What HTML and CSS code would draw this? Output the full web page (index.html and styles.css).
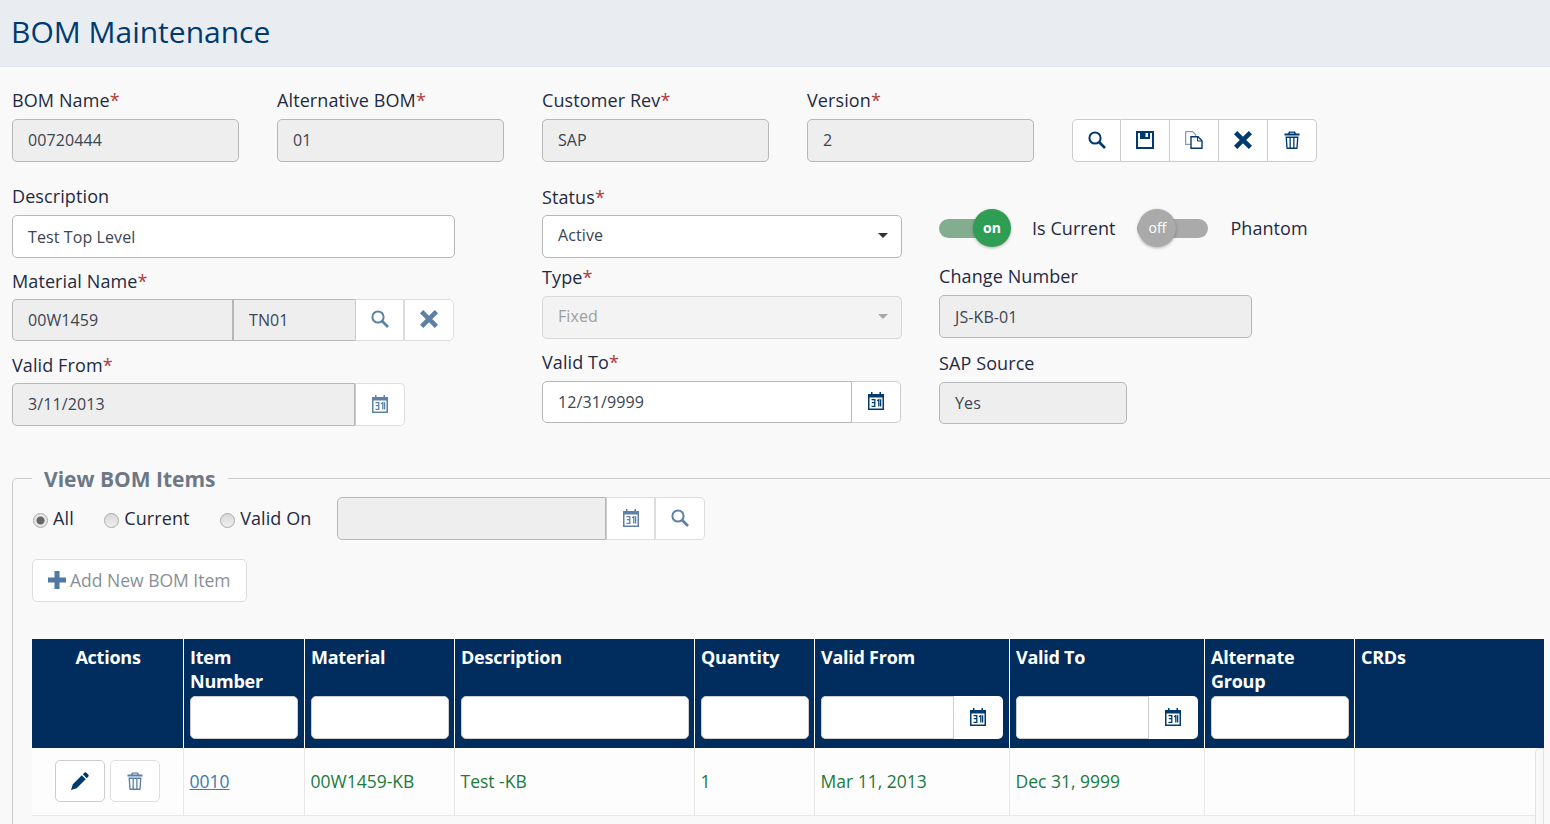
FILE: index.html
```html
<!DOCTYPE html>
<html lang="en">

<head>
    <meta charset="UTF-8">
    <meta name="viewport" content="width=device-width, initial-scale=1.0">
    <title>BOM Maintenance</title>
    <link rel="stylesheet" href="styles.css">
</head>

<body>
    <svg class="defs" width="0" height="0">
        <symbol id="i-search" viewBox="0 0 18 18">
            <circle cx="7" cy="7" r="5.6" fill="none" stroke="currentColor" stroke-width="2"></circle>
            <path d="M11 11l6 6" fill="none" stroke="currentColor" stroke-width="2.6"></path>
        </symbol>
        <symbol id="i-save" viewBox="0 0 18 18">
            <path fill="currentColor" fill-rule="evenodd" d="M0 0h18v18H0zM2 2v14h14V2h-2v6H4V2zM9.500 2v4H12V2z"></path>
        </symbol>
        <symbol id="i-copy" viewBox="0 0 18 18">
            <path fill="none" stroke="#7f9bb8" stroke-width="1.200" d="M.6.600h7l3 3v2M.6.600v12.800h5"></path>
            <path fill="none" stroke="currentColor" stroke-width="1.400" d="M6 5.700h7l4 4v7.600H6z"></path>
            <path fill="none" stroke="currentColor" stroke-width="1" d="M12.500 5.700v4.300H17"></path>
        </symbol>
        <symbol id="i-x" viewBox="0 0 18 18">
            <path d="M1.600 1.600l14.800 14.800M16.400 1.600l-14.800 14.800" fill="none" stroke="currentColor" stroke-width="4.600"></path>
        </symbol>
        <symbol id="i-trash" viewBox="0 0 16 18">
            <path fill="currentColor" fill-rule="evenodd" d="M5 .5h6l1 2h3.500V4.500H.5v-2H4zM6 1.700l-.4.800h4.800l-.4-.8zM1.500 5.500h13l-.8 11.500a1 1 0 0 1-1 1H3.300a1 1 0 0 1-1-1zM3 7l.6 9.500h1.900V7zM6.800 7v9.500h2.400V7zM10.500 7v9.500h1.900L13 7z"></path>
        </symbol>
        <symbol id="i-cal" viewBox="0 0 16 18">
            <path fill="currentColor" d="M3 0h1.500v2H11.500V0H13v2h3v16H0V2h3z"></path>
            <rect x="1.500" y="5.500" width="13" height="11" fill="#fff"></rect>
            <path fill="none" stroke="currentColor" stroke-width="1.300" d="M3.500 7.700h3.300v3h-3M6.800 10.700v3.600H3.500M9 8.800l1.800-1.100v6.800M12.600 7.200v7.300"></path>
        </symbol>
        <symbol id="i-pencil" viewBox="0 0 18 18">
            <path fill="currentColor" d="M13.300.8a1.500 1.500 0 0 1 2.100 0l1.800 1.800a1.500 1.500 0 0 1 0 2.100l-1.500 1.500-3.900-3.900zM10.800 3.300l3.900 3.900-9 9L0 18l1.800-5.700z"></path>
        </symbol>
        <symbol id="i-plus" viewBox="0 0 18 18">
            <path d="M9 0v18M0 9h18" fill="none" stroke="currentColor" stroke-width="5"></path>
        </symbol>
    </svg>

    <header class="page-head">
        <h1>BOM Maintenance</h1>
    </header>

    <main class="page">
        <section class="top-row">
            <div class="field w227">
                <label class="lbl-up">BOM Name<b>*</b></label>
                <div class="input off lift">00720444</div>
            </div>
            <div class="field w227">
                <label class="lbl-up">Alternative BOM<b>*</b></label>
                <div class="input off lift">01</div>
            </div>
            <div class="field w227">
                <label class="lbl-up">Customer Rev<b>*</b></label>
                <div class="input off lift">SAP</div>
            </div>
            <div class="field w227">
                <label class="lbl-up">Version<b>*</b></label>
                <div class="input off lift">2</div>
            </div>
            <div class="tool-group">
                <button class="tool"><svg class="ico18"><use href="#i-search"></use></svg></button>
                <button class="tool"><svg class="ico18"><use href="#i-save"></use></svg></button>
                <button class="tool"><svg class="ico18"><use href="#i-copy"></use></svg></button>
                <button class="tool"><svg class="ico18"><use href="#i-x"></use></svg></button>
                <button class="tool"><svg class="ico-trash"><use href="#i-trash"></use></svg></button>
            </div>
        </section>

        <section class="form-cols">
            <div class="col col-1">
                <div class="field">
                    <label class="lbl-up">Description</label>
                    <div class="input">Test Top Level</div>
                </div>
                <div class="field gap-11">
                    <label>Material Name<b>*</b></label>
                    <div class="joined h42">
                        <div class="input off part-a">00W1459</div>
                        <div class="input off part-b">TN01</div>
                        <button class="tool muted"><svg class="ico18"><use href="#i-search"></use></svg></button>
                        <button class="tool muted"><svg class="ico18"><use href="#i-x"></use></svg></button>
                    </div>
                </div>
                <div class="field gap-12">
                    <label>Valid From<b>*</b></label>
                    <div class="joined w393">
                        <div class="input off grow lift">3/11/2013</div>
                        <button class="tool muted"><svg class="ico-cal"><use href="#i-cal"></use></svg></button>
                    </div>
                </div>
            </div>

            <div class="col col-2">
                <div class="field">
                    <label>Status<b>*</b></label>
                    <div class="input select">Active<i class="caret"></i></div>
                </div>
                <div class="field gap-8">
                    <label class="lbl-up">Type<b>*</b></label>
                    <div class="input select dim">Fixed<i class="caret"></i></div>
                </div>
                <div class="field gap-11">
                    <label class="lbl-7">Valid To<b>*</b></label>
                    <div class="joined h42 w359">
                        <div class="input grow">12/31/9999</div>
                        <button class="tool"><svg class="ico-cal"><use href="#i-cal"></use></svg></button>
                    </div>
                </div>
            </div>

            <div class="col col-3">
                <div class="switches">
                    <span class="switch on"><span class="knob">on</span></span>
                    <span class="switch-label">Is Current</span>
                    <span class="switch"><span class="knob">off</span></span>
                    <span class="switch-label">Phantom</span>
                </div>
                <div class="field gap-17 w313">
                    <label class="lbl-up">Change Number</label>
                    <div class="input off">JS-KB-01</div>
                </div>
                <div class="field gap-14 w188">
                    <label class="lbl-up">SAP Source</label>
                    <div class="input off h42">Yes</div>
                </div>
            </div>
        </section>

        <fieldset class="items">
            <legend>View BOM Items</legend>

            <div class="filter-row">
                <label class="radio"><input type="radio" name="view" checked>All</label>
                <label class="radio"><input type="radio" name="view">Current</label>
                <label class="radio"><input type="radio" name="view">Valid On</label>
                <div class="joined filter-date">
                    <div class="input off grow"></div>
                    <button class="tool muted"><svg class="ico-cal"><use href="#i-cal"></use></svg></button>
                    <button class="tool muted"><svg class="ico18"><use href="#i-search"></use></svg></button>
                </div>
            </div>

            <button class="add-btn"><svg class="ico-plus"><use href="#i-plus"></use></svg>Add New BOM Item</button>

            <div class="table-wrap">
                <table class="grid">
                    <colgroup>
                        <col class="c-actions">
                        <col class="c-item">
                        <col class="c-material">
                        <col class="c-desc">
                        <col class="c-qty">
                        <col class="c-date">
                        <col class="c-date">
                        <col class="c-alt">
                        <col>
                    </colgroup>
                    <thead>
                        <tr>
                            <th class="center"><div class="th-title">Actions</div></th>
                            <th class="pr6"><div class="th-title">Item Number</div><input class="th-input"></th>
                            <th><div class="th-title">Material</div><input class="th-input"></th>
                            <th><div class="th-title">Description</div><input class="th-input"></th>
                            <th><div class="th-title">Quantity</div><input class="th-input"></th>
                            <th class="pr6">
                                <div class="th-title">Valid From</div>
                                <div class="th-date"><input class="th-input">
                                    <span class="th-cal"><svg class="ico-cal"><use href="#i-cal"></use></svg></span></div>
                            </th>
                            <th class="pr6">
                                <div class="th-title">Valid To</div>
                                <div class="th-date"><input class="th-input">
                                    <span class="th-cal"><svg class="ico-cal"><use href="#i-cal"></use></svg></span></div>
                            </th>
                            <th><div class="th-title">Alternate Group</div><input class="th-input"></th>
                            <th><div class="th-title">CRDs</div></th>
                        </tr>
                    </thead>
                    <tbody>
                        <tr>
                            <td class="center">
                                <button class="act"><svg class="ico18"><use href="#i-pencil"></use></svg></button>
                                <button class="act faded"><svg class="ico-trash"><use href="#i-trash"></use></svg></button>
                            </td>
                            <td><a href="#">0010</a></td>
                            <td>00W1459-KB</td>
                            <td>Test -KB</td>
                            <td>1</td>
                            <td>Mar 11, 2013</td>
                            <td>Dec 31, 9999</td>
                            <td></td>
                            <td></td>
                        </tr>
                    </tbody>
                </table>
                <div class="scroll-edge"></div>
            </div>
        </fieldset>
    </main>
</body>

</html>
```

FILE: styles.css
```css
* {
    margin: 0;
    padding: 0;
    box-sizing: border-box;
}

html,
body {
    height: 824px;
    overflow: hidden;
}

body {
    background-color: #f9f9f9;
    color: #1f2a44;
    font: 18px/24px "Open Sans", "Noto Sans", sans-serif;
}

.defs {
    position: absolute;
}

.page-head {
    height: 67px;
    padding: 11px 11px 0;
    background-color: #e9edf2;
    border-bottom: 1px solid #e2e5e9;
}

.page-head h1 {
    color: #003b6f;
    font-size: 30px;
    font-weight: 400;
    line-height: 42px;
}

.page {
    padding: 22px 0 0 12px;
}

/* fields */
.field {
    display: flex;
    flex-direction: column;
}

.field label {
    line-height: 24px;
    letter-spacing: .1px;
    margin-bottom: 6px;
}

.field label.lbl-7 {
    margin-bottom: 7px;
}

.field label.lbl-up {
    margin-top: -1px;
    margin-bottom: 7px;
}

.field label b {
    color: #b03a3a;
    font-weight: 400;
}

.gap-8 { margin-top: 8px; }
.gap-11 { margin-top: 11px; }
.gap-12 { margin-top: 12px; }
.gap-14 { margin-top: 14px; }
.gap-17 { margin-top: 17px; }

.w227 { width: 227px; }
.w313 { width: 313px; }
.w188 { width: 188px; }
.w393 { width: 393px; }
.w359 { width: 359px; }

.input {
    display: flex;
    align-items: center;
    height: 43px;
    padding: 0 15px;
    background-color: #fff;
    border: 1px solid #b5b8bb;
    border-radius: 5px;
    color: #3c4552;
    font-size: 16px;
    letter-spacing: .1px;
}

.input.off {
    background-color: #eee;
}

.input.h42 {
    height: 42px;
}

.input.lift {
    padding-bottom: 2px;
}

.select {
    justify-content: space-between;
    padding-right: 13px;
    padding-bottom: 3px;
}

.select.dim {
    background-color: #f2f3f2;
    border-color: #d5d7d8;
    color: #9a9fa3;
}

.caret {
    border-top: 5px solid #333;
    border-left: 5px solid transparent;
    border-right: 5px solid transparent;
}

.dim .caret {
    border-top-color: #a5a8ab;
}

/* input + addon buttons */
.joined {
    display: flex;
    height: 43px;
}

.joined.h42 {
    height: 42px;
}

.joined .input {
    height: 100%;
    border-radius: 5px 0 0 5px;
}

.joined .grow {
    flex: 1;
}

.joined .part-a {
    width: 220px;
    border-right: 0;
}

.joined .part-b {
    width: 123px;
    border-radius: 0;
    border-left-width: 2px;
    border-right: 0;
}

.tool {
    display: flex;
    align-items: center;
    justify-content: center;
    width: 49px;
    padding-bottom: 2px;
    background-color: #fff;
    border: 1px solid #ccc;
    border-left-width: 0;
    color: #003b70;
}

.tool.muted {
    border-color: #ddd;
    border-left: 1px solid #ccc;
    color: #5d80a6;
}

.tool.muted + .tool.muted {
    border-left-color: #ddd;
}

.joined .tool:last-child {
    border-radius: 0 5px 5px 0;
}

.joined .tool.muted:last-child {
    width: 50px;
}

.ico18 {
    width: 18px;
    height: 18px;
}

.ico-trash {
    width: 16px;
    height: 18px;
}

.ico-cal {
    width: 16px;
    height: 18px;
}

.ico-plus {
    width: 18px;
    height: 18px;
    color: #4f78a3;
}

/* top row */
.top-row {
    display: flex;
    gap: 38px;
}

.tool-group {
    display: flex;
    align-self: flex-end;
    height: 43px;
}

.tool-group .tool:first-child {
    width: 49px;
    border-left-width: 1px;
    border-radius: 5px 0 0 5px;
}

.tool-group .tool:last-child {
    border-radius: 0 5px 5px 0;
}

/* three form columns */
.form-cols {
    display: flex;
    margin-top: 23px;
}

.col-1 {
    width: 443px;
    margin-right: 87px;
}

.col-2 {
    width: 360px;
    margin-right: 37px;
}

.switches {
    display: flex;
    align-items: center;
    height: 40px;
    margin-top: 23px;
}

.switch {
    position: relative;
    width: 71px;
    height: 19px;
    background-color: #aaa;
    border-radius: 10px;
}

.switch.on {
    background-color: #83ad8f;
}

.knob {
    position: absolute;
    top: -10px;
    left: 1px;
    width: 38px;
    height: 38px;
    background-color: #aaa;
    border-radius: 50%;
    box-shadow: 0 1px 3px rgba(0, 0, 0, .3);
    color: #fff;
    font-size: 14px;
    line-height: 38px;
    text-align: center;
}

.switch.on .knob {
    left: 34px;
    background-color: #2f9e54;
    font-weight: 700;
}

.switch-label {
    margin: 0 22px;
    letter-spacing: .05px;
}

/* BOM items */
.items {
    margin: 37px -12px 0 0;
    padding: 4px 17px 0 19px;
    border: 1px solid #ccc;
    border-bottom: 0;
    border-radius: 5px 5px 0 0;
}

.items legend {
    padding: 2px 12px 0;
    color: #6d7886;
    font-size: 21px;
    font-weight: 700;
    line-height: 28px;
}

.filter-row {
    display: flex;
    align-items: center;
    height: 43px;
}

.radio {
    display: flex;
    align-items: center;
    margin-right: 29.500px;
    padding-bottom: 2px;
    letter-spacing: .1px;
}

.radio input {
    appearance: none;
    width: 15px;
    height: 15px;
    margin: 6px 5px 0 1px;
    background: linear-gradient(#d8d8d8, #efefef);
    border: 1px solid #aaa;
    border-radius: 50%;
}

.radio input:checked {
    background: radial-gradient(circle, #666 0 3.500px, #e6e6e6 4.500px);
}

.filter-date {
    width: 368px;
    margin-left: -4px;
}

.add-btn {
    display: flex;
    align-items: center;
    gap: 4px;
    width: 215px;
    height: 43px;
    margin-top: 19px;
    padding: 0 0 2px 15px;
    background-color: #fff;
    border: 1px solid #ddd;
    border-radius: 5px;
    color: #8a8f94;
    font: 17.500px "Open Sans", sans-serif;
}

/* table */
.table-wrap {
    position: relative;
    margin-top: 37px;
    padding-bottom: 8px;
}

.grid {
    width: 100%;
    table-layout: fixed;
    border-collapse: collapse;
}

.c-actions { width: 151px; }
.c-item { width: 121px; }
.c-material { width: 150px; }
.c-desc { width: 240px; }
.c-qty { width: 120px; }
.c-date { width: 195px; }
.c-alt { width: 150px; }

.grid th {
    height: 109px;
    padding: 6px 5px 9px 6px;
    background-color: #002d5d;
    border-left: 1px solid #fff;
    color: #fff;
    font-weight: 700;
    letter-spacing: -.25px;
    text-align: left;
    vertical-align: top;
}

.grid th:first-child {
    border-left: 0;
}

.grid th.center {
    text-align: center;
}

.grid th.pr6 {
    padding-right: 6px;
}

.th-title {
    height: 51px;
    margin-left: .5px;
}

.th-input {
    display: block;
    width: 100%;
    height: 43px;
    background-color: #fff;
    border: 1px solid #ccc;
    border-radius: 5px;
}

.th-date {
    display: flex;
    height: 43px;
    background-color: #fff;
    border-radius: 5px;
}

.th-date .th-input {
    flex: 1;
    min-width: 0;
    border-right: 0;
    border-radius: 5px 0 0 5px;
}

.th-cal {
    display: flex;
    align-items: center;
    justify-content: center;
    width: 50px;
    padding-bottom: 2px;
    border-left: 1px solid #ccc;
    color: #003b70;
}

.grid td {
    height: 67px;
    padding: 0 6px;
    background-color: #fdfdfd;
    border-left: 1px solid #e8e8e8;
    border-bottom: 1px solid #e8e8e8;
    color: #1a7a3c;
    font-size: 17.500px;
}

.grid td:first-child {
    border-left: 0;
    padding-left: 7px;
}

.grid td.center {
    text-align: center;
}

.grid a {
    color: #3f78b0;
}

.act {
    width: 50px;
    height: 42px;
    background-color: #fff;
    border: 1px solid #ccc;
    border-radius: 5px;
    color: #003b70;
    vertical-align: middle;
}

.act svg {
    vertical-align: middle;
}

.act.faded {
    border-color: #ddd;
    color: #5d80a6;
}

.scroll-edge {
    position: absolute;
    top: 109px;
    right: 0;
    bottom: 0;
    width: 9px;
    background-color: #f9f9f9;
    border: 1px solid #e3e3e3;
    border-bottom: 0;
    border-radius: 5px 0 0 0;
}
```
